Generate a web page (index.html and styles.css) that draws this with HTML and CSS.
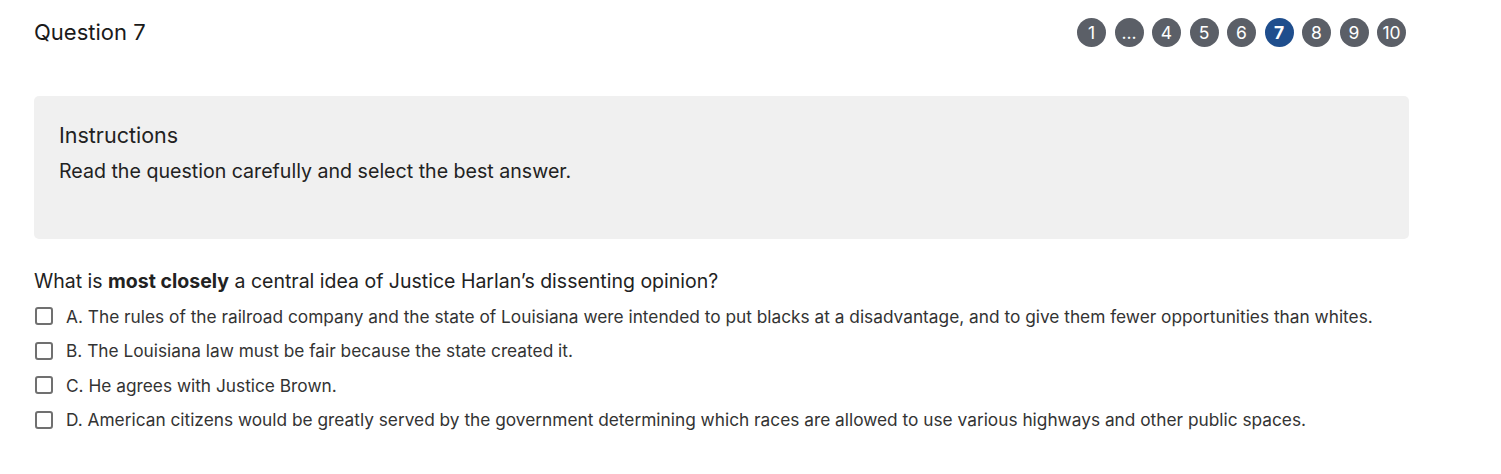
FILE: index.html
```html
<!DOCTYPE html>
<html>
<head>
<meta charset="utf-8">
<link rel="stylesheet" href="styles.css">
</head>
<body>
<div class="page">
  <header class="top">
    <h1 class="title">Question 7</h1>
    <nav class="pager">
      <span class="dot">1</span>
      <span class="dot">...</span>
      <span class="dot">4</span>
      <span class="dot">5</span>
      <span class="dot">6</span>
      <span class="dot active">7</span>
      <span class="dot">8</span>
      <span class="dot">9</span>
      <span class="dot">10</span>
    </nav>
  </header>
  <section class="instructions">
    <h2 class="inst-title">Instructions</h2>
    <p class="inst-text">Read the question carefully and select the best answer.</p>
  </section>
  <p class="question">What is <b>most closely</b> a central idea of Justice Harlan’s dissenting opinion?</p>
  <ul class="options">
    <li class="option"><span class="box"></span><span>A. The rules of the railroad company and the state of Louisiana were intended to put blacks at a disadvantage, and to give them fewer opportunities than whites.</span></li>
    <li class="option"><span class="box"></span><span>B. The Louisiana law must be fair because the state created it.</span></li>
    <li class="option"><span class="box"></span><span>C. He agrees with Justice Brown.</span></li>
    <li class="option"><span class="box"></span><span>D. American citizens would be greatly served by the government determining which races are allowed to use various highways and other public spaces.</span></li>
  </ul>
</div>
</body>
</html>
```
FILE: styles.css
```css
* { box-sizing: border-box; }
body {
  margin: 0;
  background: #fff;
  font-family: Inter, Lato, "Liberation Sans", sans-serif;
  color: #222;
}
.page {
  width: 1375px;
  margin-left: 34px;
  padding-top: 18px;
}
.top {
  display: flex;
  justify-content: space-between;
  align-items: flex-start;
  height: 78px;
}
.title {
  margin: 0;
  font-weight: 400;
  font-size: 22px;
  line-height: 28px;
  color: #1a1a1a;
}
.pager {
  display: flex;
  gap: 8.5px;
  margin-right: 3px;
}
.dot {
  width: 29px;
  height: 29px;
  border-radius: 50%;
  background: #5b5f67;
  color: #fff;
  font-size: 17.5px;
  display: flex;
  align-items: center;
  justify-content: center;
}
.dot.active {
  background: #1f4e8d;
  font-weight: 700;
}
.instructions {
  background: #f0f0f0;
  border-radius: 5px;
  height: 143px;
  padding: 25px 25px;
}
.inst-title {
  margin: 0;
  font-weight: 400;
  font-size: 21.5px;
  line-height: 28px;
}
.inst-text {
  margin: 10px 0 0;
  font-size: 19.6px;
  line-height: 24px;
}
.question {
  margin: 29px 0 0;
  font-size: 19.5px;
  line-height: 26px;
}
.question b { font-weight: 700; }
.options {
  list-style: none;
  margin: 5px 0 0;
  padding: 0;
}
.option {
  display: flex;
  align-items: center;
  gap: 13px;
  height: 34.5px;
  font-size: 17.3px;
  color: #333;
}
.box {
  width: 18px;
  height: 18px;
  border: 2px solid #707070;
  border-radius: 3px;
  margin-left: 1px;
  flex: none;
}
```
